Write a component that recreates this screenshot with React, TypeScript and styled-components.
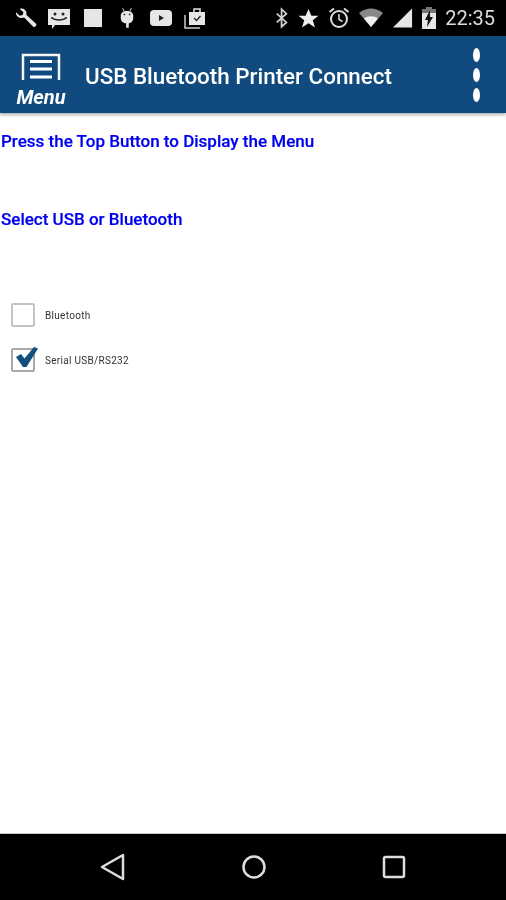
import { createGlobalStyle, styled } from "styled-components";

export default function App() {
	return (
		<>
			<GlobalStyle />
			<Screen>
				<StatusBar>
					<StatusGroup>
						<StatusSlot><WrenchIcon /></StatusSlot>
						<StatusSlot><ChatIcon /></StatusSlot>
						<StatusSlot><StopIcon /></StatusSlot>
						<StatusSlot><AndroidIcon /></StatusSlot>
						<StatusSlot><VideoIcon /></StatusSlot>
						<StatusSlot><BagIcon /></StatusSlot>
					</StatusGroup>
					<SystemGroup>
						<BluetoothIcon />
						<StarIcon />
						<AlarmIcon />
						<WifiIcon />
						<SignalIcon />
						<BatteryIcon />
						<Clock>22:35</Clock>
					</SystemGroup>
				</StatusBar>
				<AppBar>
					<MenuButton>
						<MenuIcon />
						<MenuLabel>Menu</MenuLabel>
					</MenuButton>
					<Title>USB Bluetooth Printer Connect</Title>
					<Overflow>
						<Dot />
						<Dot />
						<Dot />
					</Overflow>
				</AppBar>
				<Content>
					<Heading>Press the Top Button to Display the Menu</Heading>
					<Heading $top={58}>Select USB or Bluetooth</Heading>
					<Options>
						<Option>
							<Box />
							<OptionLabel>Bluetooth</OptionLabel>
						</Option>
						<Option>
							<Box $checked>
								<CheckIcon />
							</Box>
							<OptionLabel>Serial USB/RS232</OptionLabel>
						</Option>
					</Options>
				</Content>
				<NavBar>
					<BackIcon />
					<HomeIcon />
					<RecentIcon />
				</NavBar>
			</Screen>
		</>
	);
}

//#region Icons
const light = "#e6e6e6";

function WrenchIcon() {
	return (
		<svg width="23" height="23" viewBox="0 0 24 24">
			<path d="M2 5.500 6 9l3-.6.8-3L6 2c3-1.200 6.500.6 7 4 .1.8 0 1.500-.2 2.200L23 17.500c1.300 1.300-1.200 4.200-2.800 3L10.500 11c-4 1.600-8.800-1-8.500-5.500Z" fill={light} />
		</svg>
	);
}

function ChatIcon() {
	return (
		<svg width="24" height="24" viewBox="0 0 24 24">
			<path d="M1 3h22v16H8l-3 4v-4H1Z" fill={light} />
			<circle cx="8" cy="8" r="1.500" fill="#222" />
			<circle cx="16" cy="8" r="1.500" fill="#222" />
			<path d="M4 12h1.500c2 2.500 11 2.500 13 0H20" fill="none" stroke="#222" strokeWidth="1.500" />
		</svg>
	);
}

function StopIcon() {
	return (
		<svg width="20" height="20" viewBox="0 0 20 20">
			<rect x="1" y="1" width="18" height="18" fill={light} />
		</svg>
	);
}

function AndroidIcon() {
	return (
		<svg width="16" height="24" viewBox="0 0 18 24">
			<path d="M4 1l2 4M14 1l-2 4" stroke="#bbb" strokeWidth="1.200" />
			<path d="M2 9c0-3 3-5 7-5s7 2 7 5v3c0 4-3 6-5 6v5H8v-5c-3 0-6-2-6-6Z" fill={light} />
			<circle cx="6" cy="8" r="1" fill="#333" />
			<circle cx="12" cy="8" r="1" fill="#333" />
		</svg>
	);
}

function VideoIcon() {
	return (
		<svg width="24" height="18" viewBox="0 0 24 18">
			<rect x="1" y="1" width="22" height="16" rx="4" fill={light} />
			<path d="M10 6l5 3-5 3Z" fill="#222" />
		</svg>
	);
}

function BagIcon() {
	return (
		<svg width="22" height="24" viewBox="0 0 22 24">
			<path d="M1 9v13h15" fill="none" stroke="#ccc" strokeWidth="1.500" />
			<path d="M5 6h16v13H5Z" fill={light} />
			<path d="M10 6V3h6v3" fill="none" stroke={light} strokeWidth="1.500" />
			<path d="M10 12l2.500 2.500 4-4.500" fill="none" stroke="#222" strokeWidth="1.300" />
		</svg>
	);
}

function BluetoothIcon() {
	return (
		<svg width="14" height="22" viewBox="0 0 16 24">
			<path d="M2 7l11 10-5.500 5V2L13 7 2 17" fill="none" stroke="#d0d0d0" strokeWidth="2" />
		</svg>
	);
}

function StarIcon() {
	return (
		<svg width="21" height="21" viewBox="0 0 22 22">
			<path d="M11 1l3 7h7.500l-6 4.800 2.300 7.700L11 16l-6.800 4.500 2.300-7.700-6-4.800H8Z" fill="#eee" />
		</svg>
	);
}

function AlarmIcon() {
	return (
		<svg width="22" height="22" viewBox="0 0 22 22" fill="none" stroke="#ddd">
			<circle cx="11" cy="12" r="8" strokeWidth="2" />
			<path d="M11 7v5.500l3.500 2" strokeWidth="1.500" />
			<path d="M1.500 5 6 1.500M20.500 5 16 1.500" strokeWidth="2" />
		</svg>
	);
}

function WifiIcon() {
	return (
		<svg width="24" height="20" viewBox="0 0 24 20">
			<path d="M0 5c7-6 17-6 24 0L12 19Z" fill="#888" />
			<path d="M5 10.500c4-3 10-3 14 0L12 19Z" fill="#f0f0f0" />
		</svg>
	);
}

function SignalIcon() {
	return (
		<svg width="21" height="20" viewBox="0 0 22 20">
			<path d="M21 0v20H1Z" fill={light} />
		</svg>
	);
}

function BatteryIcon() {
	return (
		<svg width="14" height="22" viewBox="0 0 14 22">
			<path d="M4 0h6v2h4v20H0V2h4Z" fill="#777" />
			<path d="M0 6h14v16H0Z" fill={light} />
			<path d="M8 3 3 13h3l-1 7 6-10H8Z" fill="#111" />
		</svg>
	);
}

function MenuIcon() {
	return (
		<svg width="40" height="28" viewBox="0 0 40 28">
			<path d="M2 27V2h36v25" fill="none" stroke="#f4f6f9" strokeWidth="2.500" />
			<path d="M9 8.500h22M9 16h22M9 24h22" stroke="#fff" strokeWidth="3" />
		</svg>
	);
}

function CheckIcon() {
	return (
		<CheckSvg width="24" height="20" viewBox="0 0 24 20">
			<path d="M1 10l5-3 3.500 4.500L19 0l4 1.500L11.500 20H8Z" fill="#12507f" />
		</CheckSvg>
	);
}

function BackIcon() {
	return (
		<svg width="26" height="28" viewBox="0 0 26 28">
			<path d="M23 2v24L2 14Z" fill="none" stroke="#ddd" strokeWidth="2.500" strokeLinejoin="round" />
		</svg>
	);
}

function HomeIcon() {
	return (
		<svg width="26" height="26" viewBox="0 0 26 26">
			<circle cx="13" cy="13" r="10.500" fill="none" stroke="#ddd" strokeWidth="2.500" />
		</svg>
	);
}

function RecentIcon() {
	return (
		<svg width="24" height="24" viewBox="0 0 24 24">
			<rect x="2" y="2" width="20" height="20" rx="1.500" fill="none" stroke="#ddd" strokeWidth="2.500" />
		</svg>
	);
}
//#endregion

//#region Styled Components
const GlobalStyle = createGlobalStyle`
  html, body {
    margin: 0;
    padding: 0;
    background: #fff;
  }
`;

const Screen = styled.div`
  width: 506px;
  height: 900px;
  display: flex;
  flex-direction: column;
  overflow: hidden;
  font-family: Roboto, "Liberation Sans", sans-serif;
  filter: blur(0.4px);
`;

const StatusBar = styled.div`
  height: 36px;
  flex: none;
  background: #000;
  display: flex;
  align-items: center;
  justify-content: space-between;
  padding: 0 11px 0 8px;
`;

const StatusGroup = styled.div`
  display: flex;
  align-items: center;
`;

const StatusSlot = styled.div`
  width: 34px;
  display: flex;
  justify-content: center;
  align-items: center;
`;

const SystemGroup = styled.div`
  display: flex;
  align-items: center;
  gap: 9px;
`;

const Clock = styled.span`
  font-size: 20px;
  color: #dcdcdc;
`;

const AppBar = styled.div`
  height: 77px;
  flex: none;
  background: #104a7e;
  display: flex;
  align-items: center;
  padding: 0 26px 0 15px;
  box-shadow: 0 2px 3px rgba(0, 0, 0, 0.3);
  position: relative;
`;

const MenuButton = styled.div`
  width: 52px;
  display: flex;
  flex-direction: column;
  align-items: center;
  padding-top: 10px;
`;

const MenuLabel = styled.span`
  font-size: 20px;
  line-height: 20px;
  font-weight: 700;
  font-style: italic;
  color: #fff;
  margin-top: 6px;
`;

const Title = styled.div`
  flex: 1;
  margin: 3px 0 0 18px;
  font-size: 22.4px;
  font-weight: 500;
  color: #fff;
`;

const Overflow = styled.div`
  display: flex;
  flex-direction: column;
  gap: 6px;
`;

const Dot = styled.span`
  width: 7px;
  height: 14px;
  border-radius: 50%;
  background: #fff;
`;

const Content = styled.div`
  flex: 1;
  background: #fff;
  padding: 18px 0 0 1px;
`;

const Heading = styled.div<{ $top?: number }>`
  font-size: 17px;
  line-height: 20px;
  font-weight: 500;
  color: #0000f0;
  -webkit-text-stroke: 0.2px #0000f0;
  margin-top: ${({ $top }) => $top ?? 0}px;
`;

const Options = styled.div`
  display: flex;
  flex-direction: column;
  gap: 21px;
  margin: 74px 0 0 10px;
`;

const Option = styled.div`
  display: flex;
  align-items: center;
  gap: 10px;
`;

const Box = styled.div<{ $checked?: boolean }>`
  width: 24px;
  height: 24px;
  box-sizing: border-box;
  border: 2px solid ${({ $checked }) => ($checked ? "#a8a8a8" : "#c4c4c4")};
  border-radius: 2px;
  position: relative;
`;

const CheckSvg = styled.svg`
  position: absolute;
  left: 2px;
  top: -3px;
`;

const OptionLabel = styled.span`
  font-size: 10px;
  color: #333;
  letter-spacing: 0.3px;
  margin-top: 1px;
`;

const NavBar = styled.div`
  height: 67px;
  flex: none;
  background: #000;
  border-top: 1px solid #c8c8c8;
  box-sizing: border-box;
  display: flex;
  align-items: center;
  padding: 0 100px;
  justify-content: space-between;
`;
//#endregion
